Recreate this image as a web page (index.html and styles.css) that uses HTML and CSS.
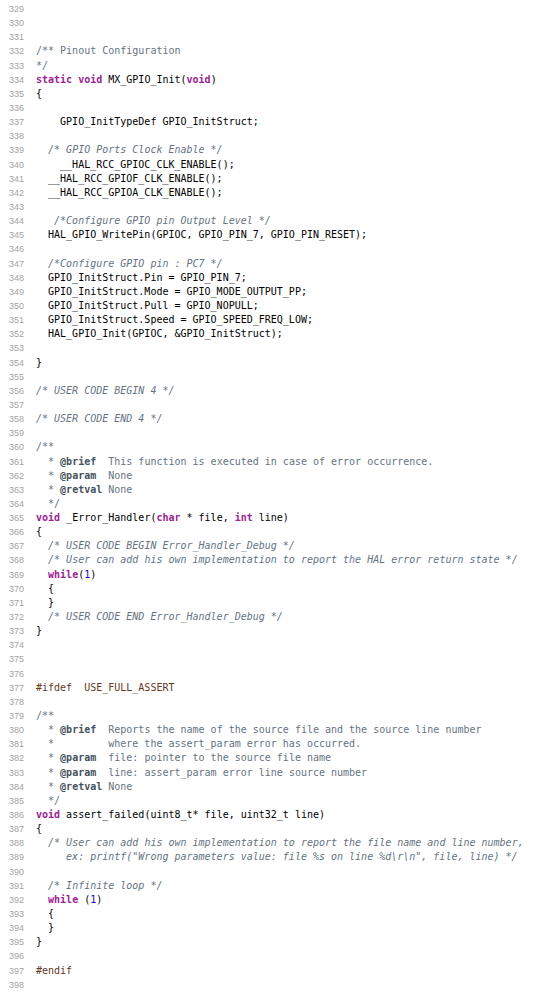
FILE: index.html
```html
<!DOCTYPE html>
<html lang="en">
<head>
<meta charset="utf-8">
<title>main.c</title>
<link rel="stylesheet" href="styles.css">
</head>
<body>
<div class="editor">
<div class="ln"><span class="no">329</span><span class="code"></span></div>
<div class="ln"><span class="no">330</span><span class="code"></span></div>
<div class="ln"><span class="no">331</span><span class="code"></span></div>
<div class="ln"><span class="no">332</span><span class="code"><span class="doc">/** Pinout Configuration</span></span></div>
<div class="ln"><span class="no">333</span><span class="code"><span class="doc">*/</span></span></div>
<div class="ln"><span class="no">334</span><span class="code"><span class="kw">static</span> <span class="kw">void</span> MX_GPIO_Init(<span class="kw">void</span>)</span></div>
<div class="ln"><span class="no">335</span><span class="code">{</span></div>
<div class="ln"><span class="no">336</span><span class="code"></span></div>
<div class="ln"><span class="no">337</span><span class="code">    GPIO_InitTypeDef GPIO_InitStruct;</span></div>
<div class="ln"><span class="no">338</span><span class="code"></span></div>
<div class="ln"><span class="no">339</span><span class="code">  <span class="cm">/* GPIO Ports Clock Enable */</span></span></div>
<div class="ln"><span class="no">340</span><span class="code">    __HAL_RCC_GPIOC_CLK_ENABLE();</span></div>
<div class="ln"><span class="no">341</span><span class="code">  __HAL_RCC_GPIOF_CLK_ENABLE();</span></div>
<div class="ln"><span class="no">342</span><span class="code">  __HAL_RCC_GPIOA_CLK_ENABLE();</span></div>
<div class="ln"><span class="no">343</span><span class="code"></span></div>
<div class="ln"><span class="no">344</span><span class="code">   <span class="cm">/*Configure GPIO pin Output Level */</span></span></div>
<div class="ln"><span class="no">345</span><span class="code">  HAL_GPIO_WritePin(GPIOC, GPIO_PIN_7, GPIO_PIN_RESET);</span></div>
<div class="ln"><span class="no">346</span><span class="code"></span></div>
<div class="ln"><span class="no">347</span><span class="code">  <span class="cm">/*Configure GPIO pin : PC7 */</span></span></div>
<div class="ln"><span class="no">348</span><span class="code">  GPIO_InitStruct.Pin = GPIO_PIN_7;</span></div>
<div class="ln"><span class="no">349</span><span class="code">  GPIO_InitStruct.Mode = GPIO_MODE_OUTPUT_PP;</span></div>
<div class="ln"><span class="no">350</span><span class="code">  GPIO_InitStruct.Pull = GPIO_NOPULL;</span></div>
<div class="ln"><span class="no">351</span><span class="code">  GPIO_InitStruct.Speed = GPIO_SPEED_FREQ_LOW;</span></div>
<div class="ln"><span class="no">352</span><span class="code">  HAL_GPIO_Init(GPIOC, &amp;GPIO_InitStruct);</span></div>
<div class="ln"><span class="no">353</span><span class="code"></span></div>
<div class="ln"><span class="no">354</span><span class="code">}</span></div>
<div class="ln"><span class="no">355</span><span class="code"></span></div>
<div class="ln"><span class="no">356</span><span class="code"><span class="cm">/* USER CODE BEGIN 4 */</span></span></div>
<div class="ln"><span class="no">357</span><span class="code"></span></div>
<div class="ln"><span class="no">358</span><span class="code"><span class="cm">/* USER CODE END 4 */</span></span></div>
<div class="ln"><span class="no">359</span><span class="code"></span></div>
<div class="ln"><span class="no">360</span><span class="code"><span class="doc">/**</span></span></div>
<div class="ln"><span class="no">361</span><span class="code"><span class="doc">  * <b class="tag">@brief</b>  This function is executed in case of error occurrence.</span></span></div>
<div class="ln"><span class="no">362</span><span class="code"><span class="doc">  * <b class="tag">@param</b>  None</span></span></div>
<div class="ln"><span class="no">363</span><span class="code"><span class="doc">  * <b class="tag">@retval</b> None</span></span></div>
<div class="ln"><span class="no">364</span><span class="code"><span class="doc">  */</span></span></div>
<div class="ln"><span class="no">365</span><span class="code"><span class="kw">void</span> _Error_Handler(<span class="kw">char</span> * file, <span class="kw">int</span> line)</span></div>
<div class="ln"><span class="no">366</span><span class="code">{</span></div>
<div class="ln"><span class="no">367</span><span class="code">  <span class="cm">/* USER CODE BEGIN Error_Handler_Debug */</span></span></div>
<div class="ln"><span class="no">368</span><span class="code">  <span class="cm">/* User can add his own implementation to report the HAL error return state */</span></span></div>
<div class="ln"><span class="no">369</span><span class="code">  <span class="kw">while</span>(<span class="num">1</span>)</span></div>
<div class="ln"><span class="no">370</span><span class="code">  {</span></div>
<div class="ln"><span class="no">371</span><span class="code">  }</span></div>
<div class="ln"><span class="no">372</span><span class="code">  <span class="cm">/* USER CODE END Error_Handler_Debug */</span></span></div>
<div class="ln"><span class="no">373</span><span class="code">}</span></div>
<div class="ln"><span class="no">374</span><span class="code"></span></div>
<div class="ln"><span class="no">375</span><span class="code"></span></div>
<div class="ln"><span class="no">376</span><span class="code"></span></div>
<div class="ln"><span class="no">377</span><span class="code"><span class="pp">#ifdef  USE_FULL_ASSERT</span></span></div>
<div class="ln"><span class="no">378</span><span class="code"></span></div>
<div class="ln"><span class="no">379</span><span class="code"><span class="doc">/**</span></span></div>
<div class="ln"><span class="no">380</span><span class="code"><span class="doc">  * <b class="tag">@brief</b>  Reports the name of the source file and the source line number</span></span></div>
<div class="ln"><span class="no">381</span><span class="code"><span class="doc">  *         where the assert_param error has occurred.</span></span></div>
<div class="ln"><span class="no">382</span><span class="code"><span class="doc">  * <b class="tag">@param</b>  file: pointer to the source file name</span></span></div>
<div class="ln"><span class="no">383</span><span class="code"><span class="doc">  * <b class="tag">@param</b>  line: assert_param error line source number</span></span></div>
<div class="ln"><span class="no">384</span><span class="code"><span class="doc">  * <b class="tag">@retval</b> None</span></span></div>
<div class="ln"><span class="no">385</span><span class="code"><span class="doc">  */</span></span></div>
<div class="ln"><span class="no">386</span><span class="code"><span class="kw">void</span> assert_failed(uint8_t* file, uint32_t line)</span></div>
<div class="ln"><span class="no">387</span><span class="code">{</span></div>
<div class="ln"><span class="no">388</span><span class="code">  <span class="cm">/* User can add his own implementation to report the file name and line number,</span></span></div>
<div class="ln"><span class="no">389</span><span class="code"><span class="cm">     ex: printf("Wrong parameters value: file %s on line %d\r\n", file, line) */</span></span></div>
<div class="ln"><span class="no">390</span><span class="code"></span></div>
<div class="ln"><span class="no">391</span><span class="code">  <span class="cm">/* Infinite loop */</span></span></div>
<div class="ln"><span class="no">392</span><span class="code">  <span class="kw">while</span> (<span class="num">1</span>)</span></div>
<div class="ln"><span class="no">393</span><span class="code">  {</span></div>
<div class="ln"><span class="no">394</span><span class="code">  }</span></div>
<div class="ln"><span class="no">395</span><span class="code">}</span></div>
<div class="ln"><span class="no">396</span><span class="code"></span></div>
<div class="ln"><span class="no">397</span><span class="code"><span class="pp">#endif</span></span></div>
<div class="ln"><span class="no">398</span><span class="code"></span></div>
</div>
</body>
</html>
```

FILE: styles.css
```css
html, body {
  margin: 0;
  padding: 0;
  background: #ffffff;
}

.editor {
  padding-top: 2px;
  display: flex;
  flex-direction: column;
}

.ln {
  display: grid;
  grid-template-columns: 24px 1fr;
  column-gap: 12px;
  height: 14.15px;
  line-height: 14.15px;
}

.no {
  text-align: right;
  font-family: "Liberation Sans", Arial, sans-serif;
  font-size: 9px;
  color: #a3a3a3;
}

.code {
  font-family: "DejaVu Sans Mono", "Liberation Mono", monospace;
  font-size: 10px;
  color: #000000;
  white-space: pre;
}

.kw {
  color: #9b2393;
  font-weight: bold;
}

.cm {
  color: #65737f;
  font-style: italic;
}

.doc {
  color: #65737f;
}

.tag {
  color: #46525d;
  font-weight: bold;
}

.pp {
  color: #643820;
}

.num {
  color: #1c00cf;
}
```
